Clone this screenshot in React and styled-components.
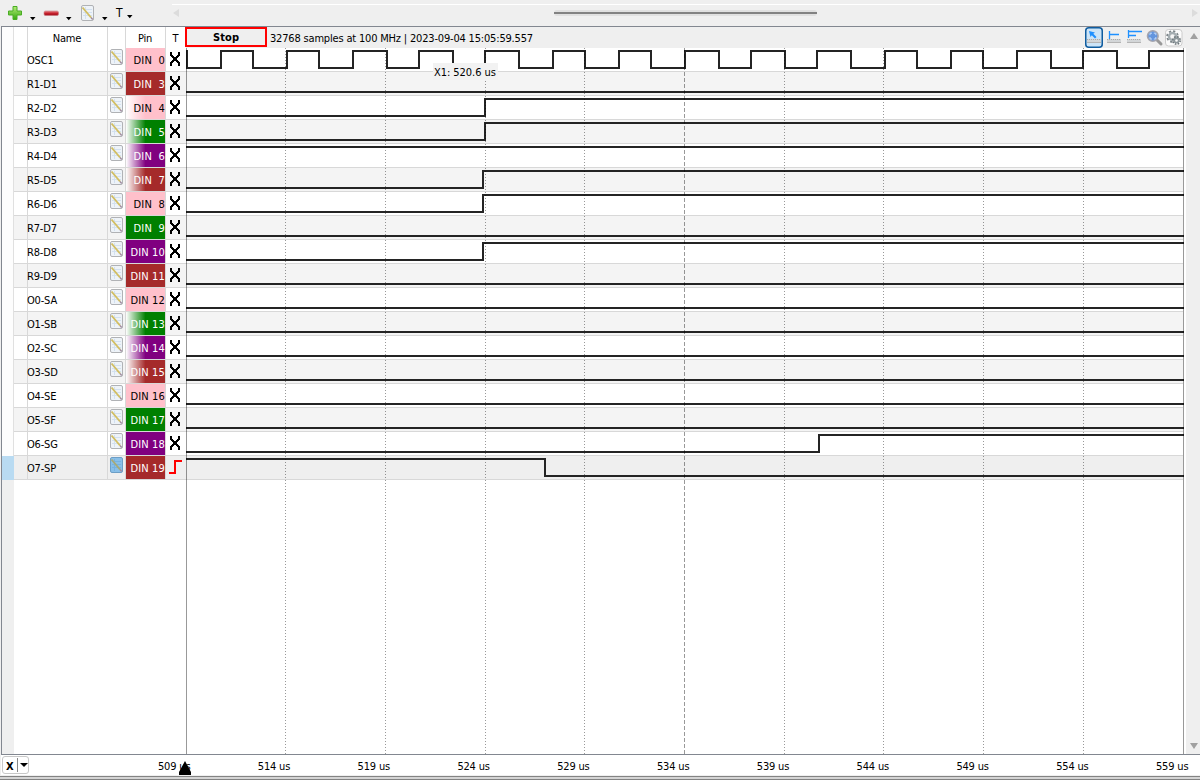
import { Fragment } from "react";
import styled, { createGlobalStyle } from "styled-components";

const GlobalStyle = createGlobalStyle`
  * {
    box-sizing: border-box;
  }

  body {
    margin: 0;
    overflow: hidden;
    background: #efefef;
    color: #000;
    font-family: "DejaVu Sans Condensed", "DejaVu Sans", sans-serif;
    font-stretch: condensed;
    font-size: 11px;
    letter-spacing: -0.18px;
  }
`;

const ROW = 24;

const signals = [
  { name: "OSC1", pin: "0", color: "pink" },
  { name: "R1-D1", pin: "3", color: "brown", start: 0 },
  { name: "R2-D2", pin: "4", color: "pink", fade: true, start: 0, edges: [298] },
  { name: "R3-D3", pin: "5", color: "green", fade: true, start: 0, edges: [298] },
  { name: "R4-D4", pin: "6", color: "purple", fade: true, start: 1 },
  { name: "R5-D5", pin: "7", color: "brown", fade: true, start: 0, edges: [296] },
  { name: "R6-D6", pin: "8", color: "pink", start: 0, edges: [296] },
  { name: "R7-D7", pin: "9", color: "green", start: 0 },
  { name: "R8-D8", pin: "10", color: "purple", start: 0, edges: [296] },
  { name: "R9-D9", pin: "11", color: "brown", start: 0 },
  { name: "O0-SA", pin: "12", color: "pink", start: 0 },
  { name: "O1-SB", pin: "13", color: "green", fade: true, start: 0 },
  { name: "O2-SC", pin: "14", color: "purple", fade: true, start: 0 },
  { name: "O3-SD", pin: "15", color: "brown", fade: true, start: 0 },
  { name: "O4-SE", pin: "16", color: "pink", start: 0 },
  { name: "O5-SF", pin: "17", color: "green", start: 0 },
  { name: "O6-SG", pin: "18", color: "purple", start: 0, edges: [632] },
  { name: "O7-SP", pin: "19", color: "brown", start: 1, edges: [358], active: true },
];

const clockEdges = [
  0, 34, 66, 100, 132, 166, 200, 232, 266, 298, 332, 366, 398, 432, 464, 498,
  532, 564, 598, 630, 664, 698, 730, 764, 796, 830, 864, 896, 930, 962,
];

const gridLines = [99, 199, 299, 398, 498, 598, 697, 797, 897];

const ticks = [509, 514, 519, 524, 529, 534, 539, 544, 549, 554, 559];

const Window = styled.div`
  display: flex;
  flex-direction: column;
  width: 1200px;
  height: 780px;
  background: #efefef;
`;

const Toolbar = styled.div`
  display: flex;
  height: 26px;
`;

const Tools = styled.div`
  display: flex;
  width: 172px;

  svg {
    display: block;
  }
`;

const Scroll = styled.div`
  display: flex;
  flex: 1;
  align-items: center;
  justify-content: space-between;
  height: 17px;
  margin-top: 4px;
  border-top: 1px solid #fff;
`;

const Thumb = styled.div`
  width: 263px;
  height: 6px;
  margin-left: -1px;
  padding: 2px 0;
  border-radius: 3px;
  background: #e0e0e0;

  &::after {
    content: "";
    display: block;
    height: 2px;
    background: #828282;
  }
`;

const Frame = styled.div`
  display: flex;
  height: 729px;
  margin-left: 1px;
  border: 1px solid #828790;
  border-right: 0;
  background: #fff;
`;

const Markers = styled.div`
  width: 12px;
  background: linear-gradient(#e0e0e0 453px, #efefef 453px) right / 1px 100% no-repeat,
    linear-gradient(#fdfdfd 453px, #efefef 453px);
`;

const ActiveMark = styled.div`
  height: 24px;
  margin-top: 429px;
  background: #b9dbf2;
`;

const Channels = styled.div`
  width: 172px;
`;

const Row = styled.div`
  display: grid;
  grid-template-columns: 14px 80px 18px 40px 20px;
  height: ${(p) => (p.$header ? 21 : ROW)}px;
  background: ${(p) => (p.$active ? "#efefef" : p.$odd ? "#f4f4f4" : "#fff")};
`;

const Cell = styled.div`
  display: flex;
  align-items: center;
  justify-content: ${(p) => (p.$center ? "center" : "flex-start")};
  min-width: 0;
  padding-top: 1px;
  padding-right: ${(p) => (p.$header ? 1 : 0)}px;
  border-right: ${(p) => (p.$last ? 0 : 1)}px solid #d8d8d8;
  border-bottom: ${(p) => (p.$header ? 0 : 1)}px solid #d8d8d8;
  white-space: pre;
`;

const NameCell = styled(Cell)`
  text-indent: -1px;
`;

const IconCell = styled(Cell)`
  align-items: flex-start;
  padding: 1px 0 0 2px;
`;

const PinCell = styled(Cell)`
  justify-content: flex-end;
  letter-spacing: 0.15px;
  color: ${(p) => (p.$color === "pink" ? "#000" : "#fff")};
  background: ${(p) =>
    p.$fade ? `linear-gradient(90deg, #fff, ${p.$color} 50%)` : p.$color};
  background-clip: padding-box;
`;

const TriggerCell = styled(Cell)`
  align-items: flex-start;
  justify-content: flex-start;
  padding: 4px 0 0 3px;
  border-right: 0;
`;

const Main = styled.div`
  display: flex;
  flex-direction: column;
  width: 1000px;
`;

const Status = styled.div`
  display: flex;
  height: 21px;
  background: #efefef;
`;

const Stop = styled.div`
  display: flex;
  align-items: center;
  justify-content: center;
  width: 82px;
  height: 20px;
  margin-left: -1px;
  border: 2px solid #f00;
  letter-spacing: 0.1px;
  font-weight: bold;
`;

const Info = styled.div`
  flex: 1;
  padding: 1px 0 0 3px;
  line-height: 22px;
  white-space: pre;
`;

const Views = styled.div`
  width: 101px;
`;

const Plot = styled.div`
  position: relative;
  flex: 1;

  svg {
    display: block;
  }
`;

const Cursor = styled.div`
  position: absolute;
  left: 247px;
  top: 15px;
  width: 65px;
  height: 17px;
  padding-left: 1px;
  background: #f2f2f2;
  letter-spacing: -0.05px;
  line-height: 20px;
  white-space: nowrap;
`;

const SideScroll = styled.div`
  display: flex;
  flex: 1;
  flex-direction: column;
  align-items: center;
  justify-content: space-between;
  padding: 6px 0 5px 2px;
  background: #efefef;
`;

const Axis = styled.div`
  position: relative;
  display: flex;
  height: 20px;
  margin-left: 1px;
  background: #fff;
`;

const Mode = styled.div`
  display: flex;
  align-items: center;
  width: 28px;
  height: 18px;
  margin: 1px 0 0 1px;
  border: 1px solid #c8c8c8;
  border-radius: 3px;
  font-weight: bold;

  span {
    width: 15px;
    height: 14px;
    padding-left: 3px;
    border-right: 1px solid #888;
    line-height: 17px;
  }

  svg {
    margin-left: 2px;
  }
`;

const Ticks = styled.div`
  display: flex;
  margin-left: 90px;
`;

const Tick = styled.div`
  width: 99.8px;
  padding: 1px 0 0 39px;
  line-height: 22px;
  white-space: nowrap;
`;

const Origin = styled.svg`
  position: absolute;
  left: 178px;
  top: 6px;
`;

const Bottom = styled.div`
  height: 5px;
  border-top: 1px solid #efefef;
  background: linear-gradient(#838383 1px, #d4d4d4 1px, #d4d4d4 3px, #838383 3px);
`;

// x/y place the note inside a parent svg, active gives the blue selection tint
const Note = ({ x = 0, y = 0, active }) => (
  <svg x={x} y={y} width="13" height="16" viewBox="0 0 13 16">
    <rect x="0.5" y="0.5" width="12" height="15" rx="1.5" fill={active ? "#89bfe8" : "#eef3f8"} stroke={active ? "#6d9fc6" : "#b0b2b5"} />
    <path d="M2 4.5h9M2 7.5h9M2 10.5h9M4.5 2v12" stroke={active ? "#76b2df" : "#d3e1f0"} />
    <path d="M1.500 2.500l8.500 10" stroke={active ? "#a8aa76" : "#d2be62"} strokeWidth="1.9" />
    <path d="M10 12.500l1.700 2" stroke="#a18b9d" strokeWidth="1.4" />
  </svg>
);

const Caret = ({ x, y }) => <path d={`M${x} ${y}h5.500l-2.750 3.200z`} fill="#000" />;

const ToolIcons = () => (
  <svg width="172" height="26">
    <defs>
      <linearGradient id="plus" x2="0" y2="1">
        <stop stopColor="#b4ed78" />
        <stop offset="1" stopColor="#35a80e" />
      </linearGradient>
      <linearGradient id="minus" x2="0" y2="1">
        <stop stopColor="#e88a8e" />
        <stop offset="0.5" stopColor="#c6202b" />
        <stop offset="1" stopColor="#a01020" />
      </linearGradient>
    </defs>
    <path d="M13 6.5h4v4.500h4.500v4h-4.500v4.500h-4v-4.500h-4.500v-4h4.500z" fill="url(#plus)" stroke="#4aad25" strokeLinejoin="round" />
    <rect x="44" y="11" width="14.500" height="4.500" rx="1.500" fill="url(#minus)" stroke="#c77b80" strokeWidth="0.6" />
    <Note x={81} y={5} />
    <Caret x={30} y={17} />
    <Caret x={66} y={17} />
    <Caret x={102} y={17} />
    <Caret x={127} y={15} />
    <text x="116" y="17" fontSize="12">T</text>
  </svg>
);

const Ruler = ({ x }) => (
  <g shapeRendering="crispEdges">
    <rect x={x} y="12" width="14" height="4" fill="#d3d6d8" />
    <path d={`M${x} 12.500h14`} stroke="#aaa" strokeDasharray="1 1" />
    <path d={`M${x} 15.500h14`} stroke="#b4b4b4" />
  </g>
);

const ViewIcons = () => (
  <svg width="101" height="21">
    <rect x="0.750" y="0.750" width="16.500" height="19.500" rx="3" fill="#cce4f7" stroke="#0f5c9f" strokeWidth="1.500" />
    <Ruler x={2} />
    <Ruler x={22} />
    <Ruler x={42} />
    <path d="M4 4l6 1.500-1.700 1.300 3.200 3.200-1.500 1.500-3.200-3.200-1.300 1.700z" fill="#1e90ff" />
    <path d="M24.500 4v8M24 7.500h10M43.500 3v8M43 4.500h14M43 8.500h8" stroke="#1e90ff" strokeWidth="1.300" fill="none" />
    <path d="M71.500 12.500l4.500 4.500" stroke="#999" strokeWidth="3" strokeLinecap="round" />
    <circle cx="67.800" cy="9" r="5.300" fill="#6395de" stroke="#a6a6ae" strokeWidth="1.600" />
    <path d="M65 8.200v-2h2M68.800 6.200h2v2M70.800 10v2h-2M67 12h-2v-2" stroke="#c5dbf8" fill="none" />
    <rect x="80.500" y="2.500" width="16.500" height="16.500" rx="3" fill="#fbfbfb" stroke="#ccc" />
    <circle cx="87.500" cy="9.500" r="5.400" fill="none" stroke="#7c8589" strokeWidth="1.800" strokeDasharray="2.200 2.040" />
    <circle cx="87.500" cy="9.500" r="3.500" fill="#f5f5f5" stroke="#a4adb1" strokeWidth="2.400" />
    <circle cx="91.500" cy="13.500" r="3.700" fill="none" stroke="#6c7579" strokeWidth="1.600" strokeDasharray="1.600 1.300" />
    <circle cx="91.500" cy="13.500" r="2.200" fill="#fbfbfb" stroke="#8e989c" strokeWidth="1.700" />
  </svg>
);

const Cross = () => (
  <svg width="12" height="14" shapeRendering="crispEdges">
    <path d="M2 0v3l3 3v2l-3 3v3M10 0v3l-3 3v2l3 3v3M5 7h2" stroke="#000" strokeWidth="2" fill="none" />
  </svg>
);

const Rising = () => (
  <svg width="14" height="14">
    <path d="M0 13h6v-12h7" stroke="#f00" strokeWidth="2" fill="none" />
  </svg>
);

const wavePath = (signal, index) => {
  const high = index * ROW + 3;
  const low = index * ROW + 20;
  const edges = index === 0 ? clockEdges : signal.edges || [];
  let level = index === 0 ? 1 : signal.start;
  let d = `M0 ${level ? high : low}`;
  edges.forEach((x) => {
    level = 1 - level;
    d += `H${x + 1}V${level ? high : low}`;
  });
  return `${d}H998`;
};

const Waves = () => (
  <svg width="1000" height="706" shapeRendering="crispEdges">
    {signals.map((s, i) => (
      <Fragment key={s.name}>
        <rect y={i * ROW} width="997" height="23" fill={s.active ? "#efefef" : i % 2 ? "#f4f4f4" : "#fff"} />
        <rect y={i * ROW + 23} width="997" height="1" fill="#d8d8d8" />
      </Fragment>
    ))}
    {signals.map((s, i) => (
      <path key={s.name} d={wavePath(s, i)} stroke="#242424" strokeWidth="2" fill="none" />
    ))}
    {gridLines.map((x) => (
      <path key={x} d={`M${x + 0.5} 0V706`} stroke="#000" strokeOpacity="0.4" strokeDasharray={x === 498 ? "4 2" : "1 2"} />
    ))}
    <path d="M0.5 0V706M997.5 0V706" stroke="#000" strokeOpacity="0.4" />
  </svg>
);

const App = () => {
  return (
    <Window>
      <GlobalStyle />
      <Toolbar>
        <Tools>
          <ToolIcons />
        </Tools>
        <Scroll>
          <svg width="8" height="8"><path d="M7 0v8L1 4z" fill="#dcdcdc" /></svg>
          <Thumb />
          <svg width="8" height="8"><path d="M0 0v8l6-4z" fill="#dcdcdc" /></svg>
        </Scroll>
      </Toolbar>

      <Frame>
        <Markers>
          <ActiveMark />
        </Markers>
        <Channels>
          <Row $header>
            <Cell $header />
            <Cell $header $center>Name</Cell>
            <Cell $header />
            <Cell $header $center>Pin</Cell>
            <Cell $header $center $last>T</Cell>
          </Row>
          {signals.map((s, i) => (
            <Row key={s.name} $odd={i % 2} $active={s.active}>
              <Cell />
              <NameCell>{s.name}</NameCell>
              <IconCell>
                <Note active={s.active} />
              </IconCell>
              <PinCell $color={s.color} $fade={s.fade}>
                {`DIN ${s.pin.padStart(2, " ")}`}
              </PinCell>
              <TriggerCell>{s.active ? <Rising /> : <Cross />}</TriggerCell>
            </Row>
          ))}
        </Channels>
        <Main>
          <Status>
            <Stop>Stop</Stop>
            <Info>32768 samples at 100 MHz | 2023-09-04 15:05:59.557</Info>
            <Views>
              <ViewIcons />
            </Views>
          </Status>
          <Plot>
            <Waves />
            <Cursor>X1: 520.6 us</Cursor>
          </Plot>
        </Main>
        <SideScroll>
          <svg width="8" height="6"><path d="M0 6h8L4 0z" fill="#a0a0a0" /></svg>
          <svg width="8" height="6"><path d="M0 0h8L4 6z" fill="#a0a0a0" /></svg>
        </SideScroll>
      </Frame>

      <Axis>
        <Mode>
          <span>X</span>
          <svg width="8" height="5"><path d="M0 0h8L4 4z" /></svg>
        </Mode>
        <Ticks>
          {ticks.map((t) => (
            <Tick key={t}>{t} us</Tick>
          ))}
        </Ticks>
        <Origin width="12" height="14">
          <path d="M6 0l6 11v3H0v-3z" />
        </Origin>
      </Axis>
      <Bottom />
    </Window>
  );
};

export default App;
